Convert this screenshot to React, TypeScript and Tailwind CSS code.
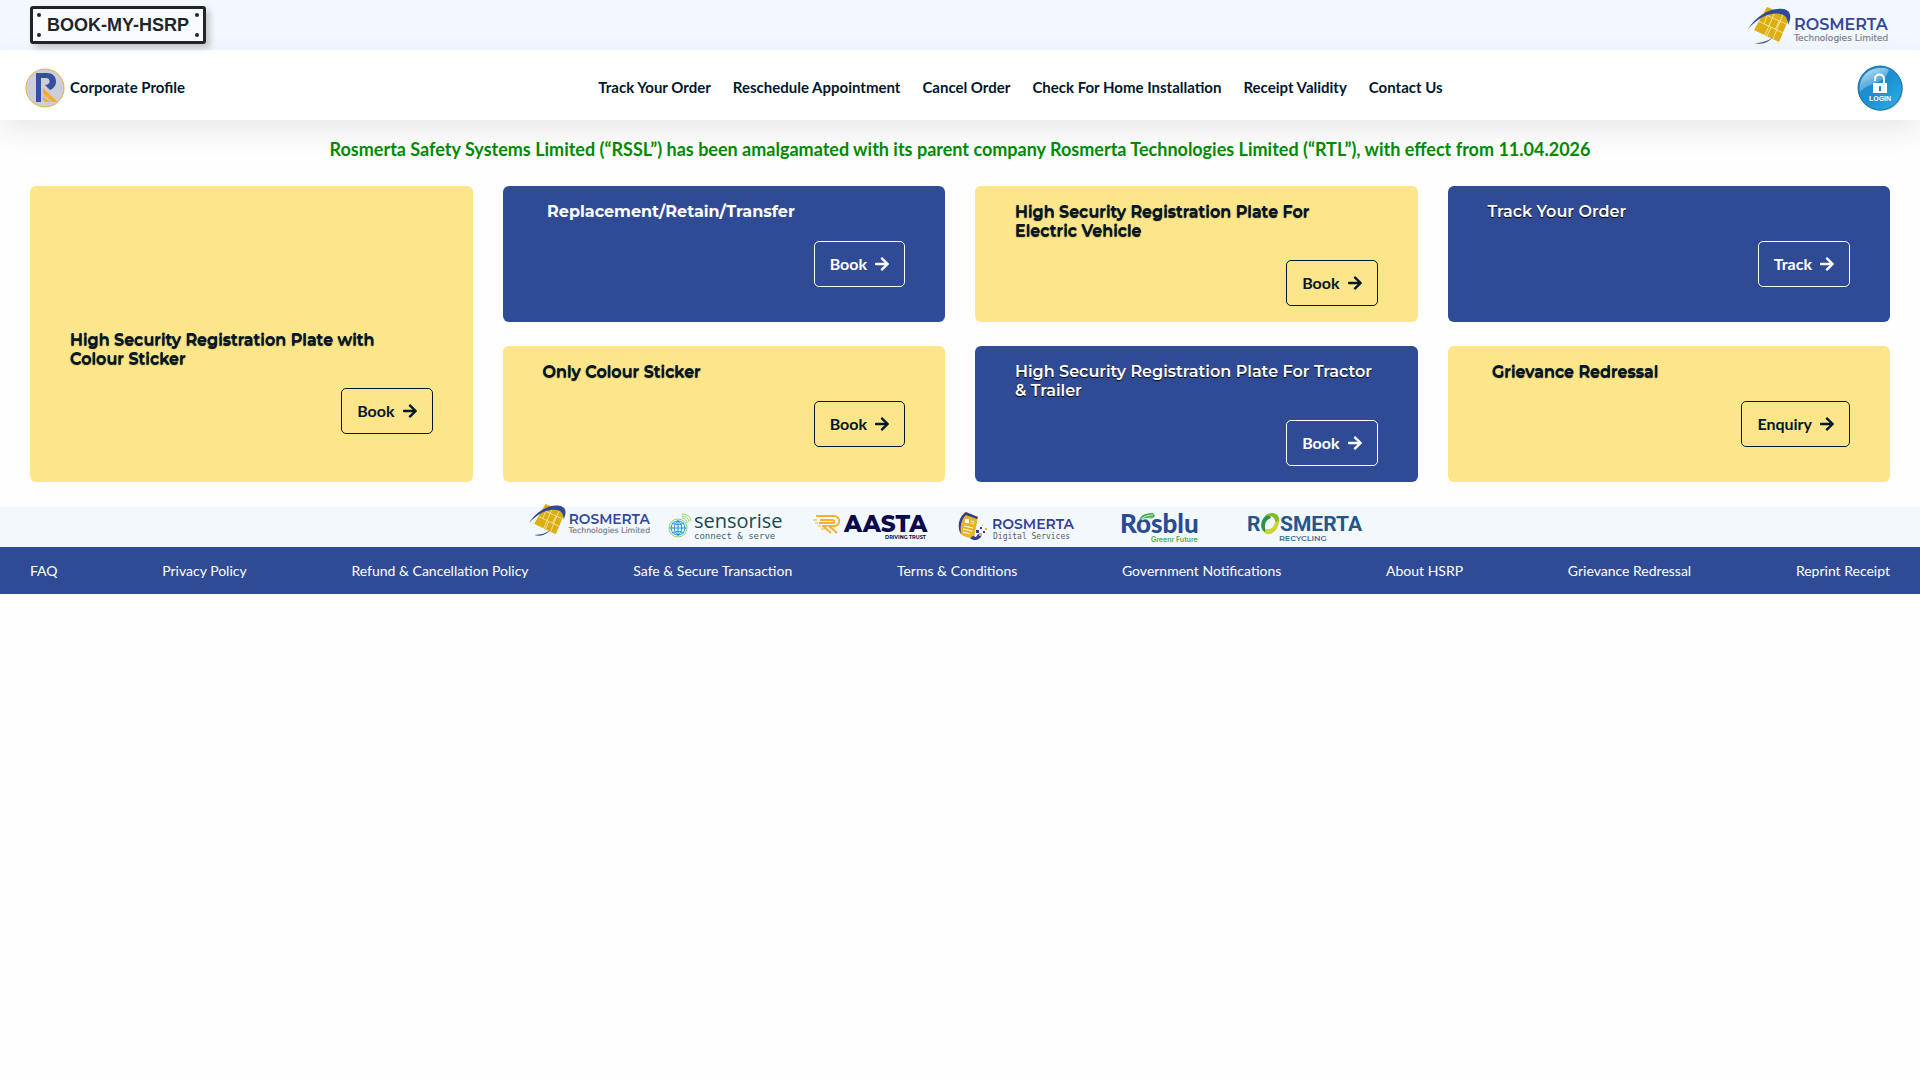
import React from 'react';
import { FaArrowRight } from 'react-icons/fa';

type Tone = 'yellow' | 'blue';

interface Service {
    title: string;
    action: string;
    tone: Tone;
    tall?: boolean;
    bold?: boolean;
}

const NAV_LINKS = [
    'Track Your Order',
    'Reschedule Appointment',
    'Cancel Order',
    'Check For Home Installation',
    'Receipt Validity',
    'Contact Us',
];

const FOOTER_LINKS = [
    'FAQ',
    'Privacy Policy',
    'Refund & Cancellation Policy',
    'Safe & Secure Transaction',
    'Terms & Conditions',
    'Government Notifications',
    'About HSRP',
    'Grievance Redressal',
    'Reprint Receipt',
];

const SERVICES: Service[] = [
    { title: 'High Security Registration Plate with Colour Sticker', action: 'Book', tone: 'yellow', tall: true },
    { title: '\u00a0Replacement/Retain/Transfer', action: 'Book', tone: 'blue', bold: true },
    { title: 'High Security Registration Plate For Electric Vehicle', action: 'Book', tone: 'yellow' },
    { title: 'Track Your Order', action: 'Track', tone: 'blue' },
    { title: 'Only Colour Sticker', action: 'Book', tone: 'yellow' },
    { title: 'High Security Registration Plate For Tractor & Trailer', action: 'Book', tone: 'blue' },
    { title: '\u00a0Grievance Redressal', action: 'Enquiry', tone: 'yellow' },
];

const RosmertaLogo: React.FC<{ className: string }> = ({ className }) => (
    <svg viewBox="0 0 140 38" className={`overflow-visible ${className}`} role="img" aria-label="Rosmerta Technologies Limited">
        <path d="M19 1 42 10 31 36 6 24Z" fill="#dcae12" />
        <path
            d="M14 7 38 18M10 15 35 27M28 4 17 29M35 8 25 33M19 10l-3 8M31 15l-4 9M23 21l-4 9"
            fill="none"
            stroke="#f3e3a4"
            strokeWidth="1"
        />
        <path d="M0 23C8 10 23 1 35 3c8 1 9 8 5 16 0-6-2-10-8-11C22 6 10 12 0 23Z" fill="#2f4a94" />
        <path d="M6 37c8 0 14-2 19-6-5 6-11 8-19 6Z" fill="#2f4a94" />
        <text x="46" y="24" fontSize="16" fontWeight="600" fill="#34489a" className="font-[Montserrat,sans-serif]">ROSMERTA</text>
        <text x="46" y="35" fontSize="9" fill="#7b8288" stroke="#7b8288" strokeWidth="0.2" className="font-['DejaVu_Sans',sans-serif]">Technologies Limited</text>
    </svg>
);

const SensoriseLogo = () => (
    <svg viewBox="0 0 115 32" className="h-8 w-[115px] overflow-visible" role="img" aria-label="Sensorise">
        <circle cx="10" cy="17" r="9" fill="#e6f5fb" stroke="#8fd06a" strokeWidth="1" />
        <circle cx="10" cy="17" r="7" fill="none" stroke="#2196e0" strokeWidth="1" />
        <path d="M10 9v16M2 17h16M4 12c4 2 8 2 12 0M4 22c4-2 8-2 12 0M10 10c-5 4-5 10 0 14M10 10c5 4 5 10 0 14" fill="none" stroke="#2196e0" strokeWidth="1" />
        <path d="M14 7c3 0 5 3 5 5M14 5c4 0 7 3 7 6M14 3c5 0 9 3 9 7" fill="none" stroke="#8fd06a" strokeWidth="1" />
        <text x="26" y="17" fontSize="20" fill="#17494d" className="font-['Open_Sans',sans-serif]">sensorise</text>
        <text x="26" y="28" fontSize="9" fill="#3a6468" className="font-['DejaVu_Sans_Mono',monospace]">connect &amp; serve</text>
    </svg>
);

const AastaLogo = () => (
    <svg viewBox="0 0 115 32" className="h-8 w-[115px] overflow-visible" role="img" aria-label="Aasta">
        <path d="M3 5h18c7 0 7 10 0 10h-5l8 7M7 9h12c3 0 3 3 0 3H6M9 15h5M10 15l8 7" fill="none" stroke="#f8ae35" strokeWidth="2" />
        <path d="M0 9h4M2 12h3M5 15h3M8 18h4" stroke="#f8ae35" strokeWidth="1" />
        <text x="31" y="21" fontSize="23" fontWeight="800" fill="#0b0a4c" className="font-[Montserrat,sans-serif]">AASTA</text>
        <text x="72" y="28" fontSize="5" fontWeight="700" fill="#0b0a4c" className="font-[Montserrat,sans-serif]">DRIVING TRUST</text>
    </svg>
);

const DigitalLogo = () => (
    <svg viewBox="0 0 115 32" className="h-8 w-[115px] overflow-visible" role="img" aria-label="Rosmerta Digital Services">
        <path d="M7 1 20 6 16 27C8 27 3 24 2 22 0 14 2 6 7 1Z" fill="#e9b22c" />
        <path d="M8 1 20 6l-1 2L8 4C3 8 2 16 3 23-1 17 0 6 8 1Z" fill="#2f3f8f" />
        <path d="M7 8h4v4H7z" fill="#fff" />
        <path d="M13 10l3 1M13 12l3 1M6 15l9 2M5 18l9 2M5 21l7 2" fill="none" stroke="#fff" strokeWidth="1" />
        <path d="M12 27c4 4 10 2 12-3l-4-1-2 3-3-1Z" fill="#2f3f8f" />
        <path d="M18 19h3v3h-3zM25 20h2v2h-2zM22 16h2v2h-2z" fill="#2f3f8f" />
        <path d="M21 22h3v3h-3zM27 17h2v2h-2zM24 14h1v1h-1z" fill="#e9b22c" />
        <text x="34" y="18" fontSize="14" fontWeight="600" fill="#34409a" className="font-[Montserrat,sans-serif]">ROSMERTA</text>
        <text x="35" y="28" fontSize="8" fill="#555b66" className="font-['DejaVu_Sans_Mono',monospace]">Digital Services</text>
    </svg>
);

const RosbluLogo = () => (
    <svg viewBox="0 0 115 32" className="h-8 w-[115px] overflow-visible" role="img" aria-label="Rosblu">
        <text x="17" y="22" fontSize="26" fontWeight="900" fill="#2b4a95" className="font-[Lato,sans-serif]">Rosblu</text>
        <path d="M36 10c1-6 7-8 14-8l2 3-3 3c-5-2-9-1-13 2Z" fill="#3faa4a" />
        <path d="M38 8c4-3 8-4 12-4M39 9c4-2 7-2 11-2" fill="none" stroke="#d5eed6" strokeWidth="1" />
        <text x="48" y="31" fontSize="7" fontWeight="600" fill="#45ab52" className="font-[Inter,sans-serif]">Greenr Future</text>
    </svg>
);

const RecyclingLogo = () => (
    <svg viewBox="0 0 115 32" className="h-8 w-[115px] overflow-visible" role="img" aria-label="Rosmerta Recycling">
        <text x="-1" y="20" fontSize="21" fontWeight="700" fill="#25568a" className="font-[Roboto,sans-serif]">R</text>
        <path d="M19 22C10 20 12 6 21 3l2 4c-6 2-8 8-4 15Z" fill="#2f9447" />
        <path d="M17 5c6-6 16-2 14 6l-4 1c1-5-3-8-10-7Z" fill="#86b92e" />
        <path d="M31 10c0 9-8 16-15 12l2-4c5 1 8-2 9-7Z" fill="#c9d530" />
        <text x="32" y="20" fontSize="21" fontWeight="700" fill="#25568a" className="font-[Roboto,sans-serif]">SMERTA</text>
        <text x="31" y="30" fontSize="8" fontWeight="600" fill="#3f6a94" className="font-[Montserrat,sans-serif]">RECYCLING</text>
    </svg>
);

const ProfileBadge = () => (
    <svg viewBox="0 0 40 40" className="h-10 w-10" aria-hidden="true">
        <circle cx="20" cy="20" r="19" fill="#cdced8" stroke="#e3b23c" strokeWidth="1" />
        <path d="M11 5h11c11 0 12 14 3 17l-5-5c6 0 6-7 1-7h-5v24h-5Z" fill="#3450a0" />
        <path d="M18 20 33 34h-6l-9-8Z" fill="#ecb22e" />
        <path d="M18 28l7 6h-5l-2-2Z" fill="#ecb22e" />
    </svg>
);

const LoginBadge = () => (
    <svg viewBox="0 0 48 48" className="h-12 w-12" aria-hidden="true">
        <defs>
            <linearGradient id="loginBall" x1="0" y1="0" x2="1" y2="1">
                <stop offset="0" stopColor="#1f86c8" />
                <stop offset="0.5" stopColor="#1c8fd0" />
                <stop offset="1" stopColor="#2bb4ea" />
            </linearGradient>
            <linearGradient id="loginShine" x1="0" y1="0" x2="0.6" y2="1">
                <stop offset="0" stopColor="#ffffff" stopOpacity="0.8" />
                <stop offset="1" stopColor="#ffffff" stopOpacity="0" />
            </linearGradient>
        </defs>
        <circle cx="25" cy="25" r="22" fill="#8b979e" opacity="0.7" />
        <circle cx="24" cy="24" r="22" fill="url(#loginBall)" stroke="#1673ad" strokeWidth="1" />
        <path d="M4 28C2 12 14 3 26 4c6 0 8 2 6 4C28 20 14 18 4 28Z" fill="url(#loginShine)" />
        <path d="M19 17v-2c0-6 9-6 9 0v5" fill="none" stroke="#fff" strokeWidth="2" />
        <rect x="17" y="19" width="14" height="10" fill="#fff" />
        <circle cx="24" cy="23" r="1" fill="#1c7fbd" />
        <path d="M23 23h2v4h-2z" fill="#1c7fbd" />
        <text x="24" y="37" fontSize="7" fontWeight="700" fill="#fff" textAnchor="middle" className="font-['Liberation_Sans',sans-serif]">LOGIN</text>
    </svg>
);

const ServiceCard: React.FC<{ service: Service }> = ({ service }) => {
    const isBlue = service.tone === 'blue';
    return (
        <article
            className={`flex flex-col rounded-md px-10 ${
                isBlue ? 'bg-[#304b95] text-white' : 'bg-[#fde58a] text-[#02182b]'
            } ${service.tall ? 'row-span-2 justify-end pt-4 pb-12' : 'py-4'}`}
        >
            <h2
                className={`pr-1 font-[Montserrat,Inter,sans-serif] text-base leading-[19px] ${
                    service.bold ? 'font-bold' : 'font-semibold [text-shadow:0_1px_1px_#000]'
                }`}
            >
                {service.title}
            </h2>
            <button
                type="button"
                className="mt-5 flex h-[46px] items-center gap-2 self-end rounded-[5px] border border-current px-[15px] font-bold"
            >
                {service.action}
                <FaArrowRight className="h-4 w-[14px]" />
            </button>
        </article>
    );
};

const Plate = () => (
    <a
        href="#home"
        className="relative flex h-[38px] w-44 items-center justify-center rounded-[3px] border-3 border-[#212529] bg-[#f8fbff] font-['Liberation_Sans',sans-serif] text-lg font-bold text-[#212529] shadow-[4px_4px_6px_rgba(0,0,0,0.2)]"
    >
        BOOK-MY-HSRP
        <span className="absolute top-1 left-1 size-1 rounded-full bg-[#212529]" />
        <span className="absolute top-1 right-1 size-1 rounded-full bg-[#212529]" />
        <span className="absolute bottom-1 left-1 size-1 rounded-full bg-[#212529]" />
        <span className="absolute right-1 bottom-1 size-1 rounded-full bg-[#212529]" />
    </a>
);

const App: React.FC = () => {
    return (
        <div className="min-h-screen bg-[#fefefe] font-[Lato,sans-serif] text-[#02182b]">
            <div className="flex h-[50px] items-center justify-between bg-[#f3f8fe] pr-8 pl-[30px]">
                <Plate />
                <RosmertaLogo className="h-[38px] w-[140px]" />
            </div>

            <header className="flex h-[70px] items-center justify-between bg-white pt-[5px] pr-4 pl-[25px] shadow-[0_10px_30px_rgba(0,0,0,0.09)]">
                <a href="#profile" className="flex items-center gap-[5px] text-[15px] font-bold">
                    <ProfileBadge />
                    Corporate Profile
                </a>
                <nav className="flex gap-[22px] text-[15px] font-bold">
                    {NAV_LINKS.map(link => (
                        <a key={link} href="#nav">{link}</a>
                    ))}
                </nav>
                <a href="#login" aria-label="Login">
                    <LoginBadge />
                </a>
            </header>

            <main>
                <p className="px-[30px] pt-4 text-center text-lg leading-[26px] font-bold text-[#008a00]">
                    Rosmerta Safety Systems Limited (“RSSL”) has been amalgamated with its parent company Rosmerta Technologies Limited (“RTL”), with effect from 11.04.2026
                </p>
                <section className="grid grid-cols-4 gap-x-[30px] gap-y-6 px-[30px] pt-6 pb-[25px]">
                    {SERVICES.map(service => (
                        <ServiceCard key={service.title} service={service} />
                    ))}
                </section>
            </main>

            <section className="flex h-10 items-center justify-center gap-[18px] bg-[#f3f8fd] pr-7">
                <RosmertaLogo className="-mt-1 h-[33px] w-[121px] self-start" />
                <div className="flex gap-[30px]">
                    <SensoriseLogo />
                    <AastaLogo />
                    <DigitalLogo />
                    <RosbluLogo />
                    <RecyclingLogo />
                </div>
            </section>

            <footer className="flex h-[47px] items-center justify-between bg-[#304b95] px-[30px] text-sm text-white">
                {FOOTER_LINKS.map(link => (
                    <a key={link} href="#info">{link}</a>
                ))}
            </footer>
        </div>
    );
};

export default App;
